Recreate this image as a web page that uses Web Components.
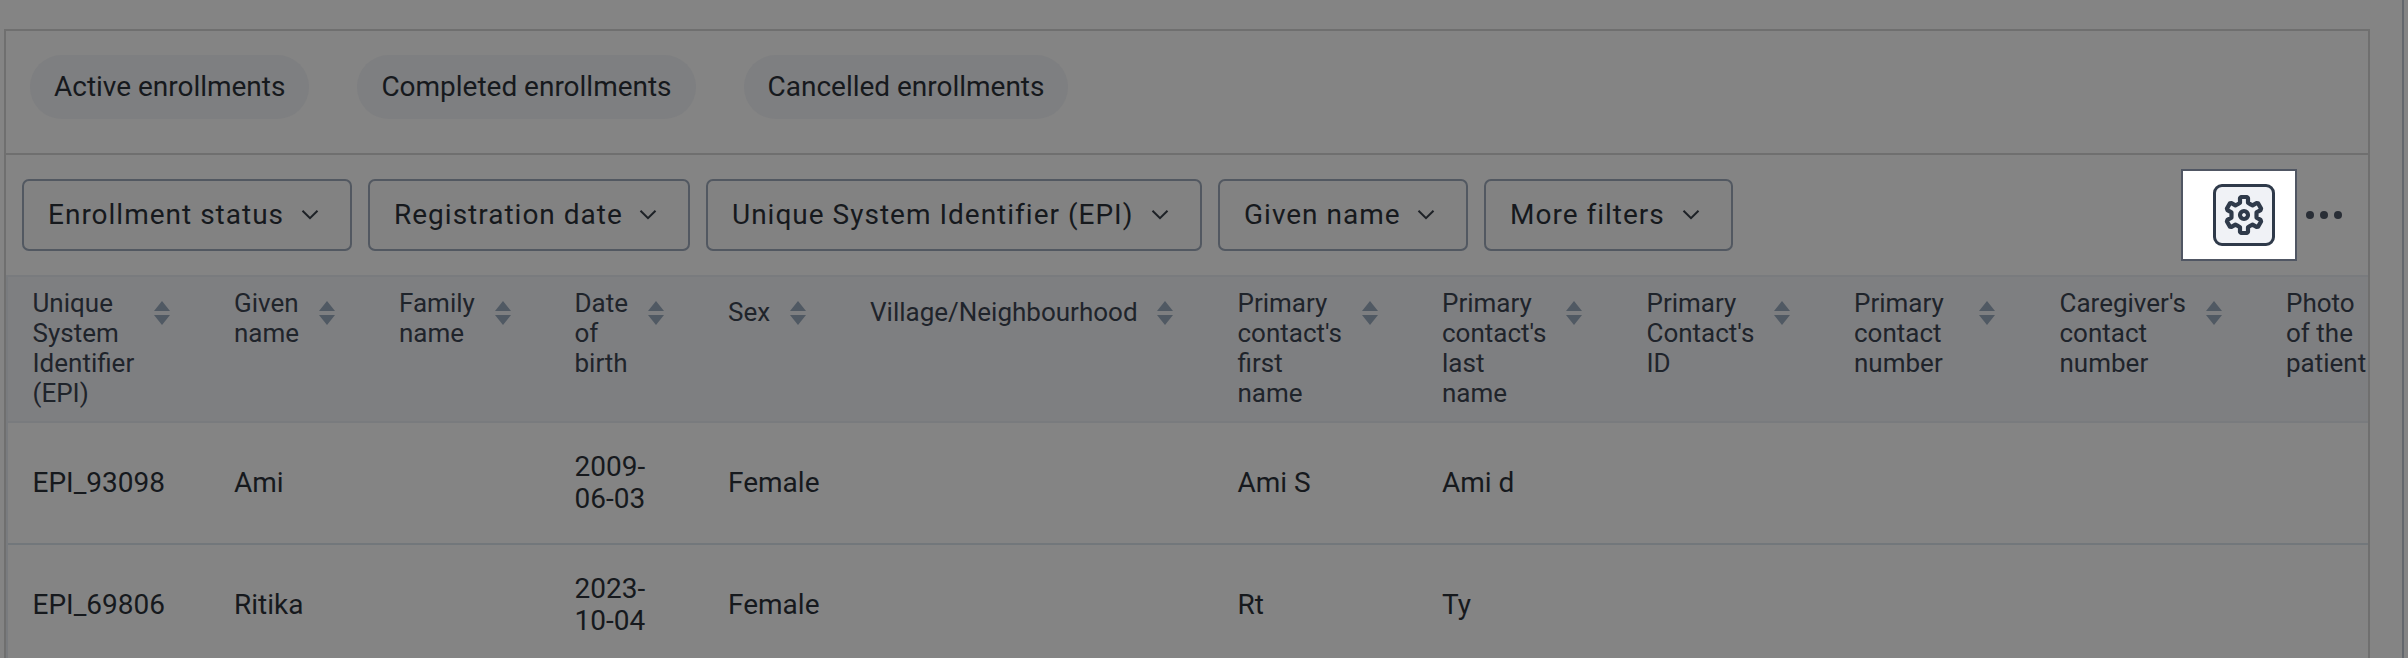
<!DOCTYPE html>
<html lang="en">
<head>
<meta charset="utf-8">
<title>Enrollments</title>
<style>
html,body{margin:0;height:658px;overflow:hidden;background:#848484}
body{font-family:Roboto,"Liberation Sans",sans-serif}
</style>
</head>
<body>
<working-list-page></working-list-page>
<script>
const define = (name, html, setup) => customElements.define(name, class extends HTMLElement {
  connectedCallback() {
    if (this.shadowRoot) return;
    this.attachShadow({ mode: 'open' }).innerHTML = html;
    if (setup) setup(this, this.shadowRoot);
  }
});

define('list-chip', `<style>
:host{display:flex;align-items:center;height:64px;padding:0 24px;border-radius:32px;background:#7e7f81;color:#16191d;font-size:28px;letter-spacing:-.015px;line-height:32px;white-space:nowrap;box-sizing:border-box}
</style><slot></slot>`);

define('filter-button', `<style>
:host{display:flex;align-items:center;box-sizing:border-box;height:72px;border:2px solid #525861;border-radius:7px;padding:0 0 2px 24px;color:#16191d;font-size:28px;letter-spacing:1px;white-space:nowrap;background:#828282}
svg{margin-left:auto;margin-right:31px;margin-top:1px}
</style><slot></slot><svg width="18" height="12" viewBox="0 0 18 12" fill="none" stroke="#1d2126" stroke-width="2"><path d="M1.5 1.7 9 9.2 16.5 1.7"/></svg>`);

define('sort-icon', `<style>:host{display:block;width:16px;height:24px;flex:none}svg{display:block}</style>
<svg width="16" height="24" viewBox="0 0 16 24" fill="#505963"><path d="M8 0 16 10H0zM0 14h16L8 24z"/></svg>`);

define('settings-button', `<style>
:host{display:flex;box-sizing:border-box;width:62px;height:62px;border:3px solid #2f3a4a;border-radius:9px;background:#f0f2f6;align-items:center;justify-content:center}
svg{display:block}
</style><svg width="44" height="44" viewBox="-22 -22 44 44" fill="none" stroke="#2f3a4a" stroke-width="4.2" stroke-linejoin="round"><path/><circle r="4"/></svg>`, (el, root) => {
  const tooth = [[-4,-12.2],[-4,-16.8],[-3,-18],[3,-18],[4,-16.8],[4,-12.2],[6.6,-10.6]];
  const pts = [];
  for (let i = 0; i < 6; i++) {
    const a = i * Math.PI / 3, c = Math.cos(a), s = Math.sin(a);
    for (const [x, y] of tooth) pts.push((x * c - y * s).toFixed(2) + ' ' + (x * s + y * c).toFixed(2));
  }
  root.querySelector('path').setAttribute('d', 'M' + pts.join('L') + 'Z');
});

define('more-button', `<style>:host{display:flex;gap:6px}i{width:8px;height:8px;border-radius:50%;background:#292e36}</style><i></i><i></i><i></i>`);

define('header-cell', `<style>
:host{display:flex;align-items:flex-start;padding:11px 0 0 25px;box-sizing:border-box;color:#1f242b;font-size:26px;line-height:30px}
.t{display:flex;flex-direction:column;justify-content:center;min-height:48px;white-space:pre}
sort-icon{margin:13px 0 0 auto;margin-right:var(--r)}
</style><div class="t"><slot></slot></div><sort-icon></sort-icon>`, (el, root) => {
  if (el.hasAttribute('plain')) root.querySelector('sort-icon').remove();
  else el.style.setProperty('--r', el.getAttribute('gap') + 'px');
});

define('body-cell', `<style>
:host{display:flex;align-items:center;padding-left:25px;box-sizing:border-box;color:#16191d;font-size:28px;line-height:32px;white-space:pre}
</style><slot></slot>`);

define('enrollment-table', `<style>
:host{display:block;border-top:2px solid #797b7e;overflow:hidden}
.body{border-left:2px solid #797b7e}
.row{display:grid;box-sizing:border-box;border-bottom:2px solid #72777b;height:122px}
.head{background:#7e7f81;height:146px;border-color:#797b7e}
</style><div class="body"></div>`, (el, root) => {
  // text start of each column, centre of its sort icon, header lines
  const cols = [[32.5,162,'Unique\nSystem\nIdentifier\n(EPI)'],[234,327,'Given\nname'],[399,503,'Family\nname'],[574.5,656,'Date\nof\nbirth'],[728,798,'Sex'],[870,1165,'Village/Neighbourhood'],[1237.5,1370,"Primary\ncontact's\nfirst\nname"],[1442,1574,"Primary\ncontact's\nlast\nname"],[1646.5,1782,"Primary\nContact's\nID"],[1854,1987,'Primary\ncontact\nnumber'],[2059.5,2214,"Caregiver's\ncontact\nnumber"],[2286,0,'Photo\nof the\npatient']];
  const rows = [
    ['EPI_93098','Ami','','2009-\n06-03','Female','','Ami S','Ami d','','','',''],
    ['EPI_69806','Ritika','','2023-\n10-04','Female','','Rt','Ty','','','','']];
  const pad = 24;
  const start = i => i ? cols[i][0] - pad - 1 : 8;
  const end = i => i + 1 < cols.length ? start(i + 1) : 2368;
  const template = cols.map((c, i) => (end(i) - start(i)) + 'px').join(' ');
  const head = cols.map((c, i) => `<header-cell style="padding-left:${c[0] - start(i)}px" ${c[1] ? `gap="${end(i) - c[1] - 8}"` : 'plain'}>${c[2]}</header-cell>`).join('');
  root.querySelector('.body').innerHTML =
    `<div class="row head" style="grid-template-columns:${template}">${head}</div>` +
    rows.map(r => `<div class="row" style="grid-template-columns:${template}">${r.map((t, i) => `<body-cell style="padding-left:${cols[i][0] - start(i)}px">${t}</body-cell>`).join('')}</div>`).join('');
});

define('working-list-page', `<style>
:host{display:flex;height:658px;background:#848484;overflow:hidden;box-sizing:border-box;padding-left:4px}
.card{width:2366px;box-sizing:border-box;margin-top:29px;height:700px;border:2px solid #6f6f6f;flex:none;overflow:hidden}
.chips{display:flex;gap:48px;padding:24px 24px 34px;border-bottom:2px solid #6f6f6f}
.filters{display:flex;gap:16px;align-items:center;height:120px;padding-left:16px;box-sizing:border-box}
.spot{box-sizing:border-box;width:116px;height:92px;border:2px solid #505663;background:#fff;display:flex;align-items:center;justify-content:flex-end;padding-right:20px;margin-left:auto}
more-button{margin:0 26px 0 -7px}
.edge{margin-left:32px;width:2px;background:#63676d;flex:none}
</style>
<div class="card">
<div class="chips"><list-chip>Active enrollments</list-chip><list-chip>Completed enrollments</list-chip><list-chip>Cancelled enrollments</list-chip></div>
<div class="filters">
<filter-button style="width:330px">Enrollment status</filter-button><filter-button style="width:322px">Registration date</filter-button><filter-button style="width:496px">Unique System Identifier (EPI)</filter-button><filter-button style="width:250px">Given name</filter-button><filter-button style="width:249px">More filters</filter-button>
<div class="spot"><settings-button></settings-button></div><more-button></more-button>
</div>
<enrollment-table></enrollment-table>
</div>
<div class="edge"></div>`);
</script>
</body>
</html>
